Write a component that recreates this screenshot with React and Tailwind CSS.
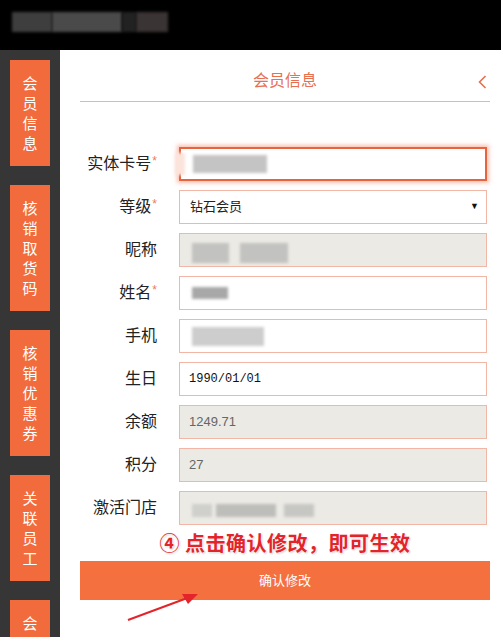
import React from 'react';

const font = { fontFamily: '"Liberation Sans", "Noto Sans CJK SC", sans-serif' };

// last tab is cut off by the window, only its first char shows
const tabs = [
  { text: '会员信息' },
  { text: '核销取货码' },
  { text: '核销优惠券' },
  { text: '关联员工' },
  { text: '会', tail: true },
];

const Blur = ({ className }) => <div className={`absolute blur-[1.5px] ${className}`} />;

const Field = ({ label, required, children, disabled, focused }) => (
  <div className="flex items-center h-[34px] pr-[3px]">
    <div className="w-[77px] text-right text-[16px] text-[#222] leading-none">
      {label}
      {required && <span className="text-[12px] text-[#ec7a5a] relative -top-[4px] ml-[1px]">*</span>}
    </div>
    <div
      className={`ml-[22px] flex-1 h-[34px] relative flex items-center text-[13px] ${
        focused
          ? 'border-2 border-[#e8643f] shadow-[0_0_4px_2px_rgba(245,140,110,0.55)]'
          : 'border border-[#f1b6a5]'
      } ${disabled ? 'bg-[#ebeae5]' : 'bg-white'}`}
    >
      {children}
    </div>
  </div>
);

export default function App() {
  return (
    <div className="w-[501px] h-[637px] overflow-hidden bg-black relative" style={font}>
      {/* top bar */}
      <div className="h-[50px] relative">
        <Blur className="left-[12px] top-[12px] w-[40px] h-[20px] bg-[#3e3e3e]" />
        <Blur className="left-[52px] top-[12px] w-[70px] h-[20px] bg-[#4a4a4a]" />
        <Blur className="left-[122px] top-[12px] w-[14px] h-[20px] bg-[#222]" />
        <Blur className="left-[136px] top-[12px] w-[32px] h-[20px] bg-[#3a3434]" />
      </div>

      <div className="flex h-[587px]">
        {/* sidebar */}
        <div className="w-[60px] bg-[#363636] flex flex-col gap-[19px] px-[10px] pt-[10px] shrink-0 overflow-hidden">
          {tabs.map((t, i) => (
            <div key={i} className={`bg-[#f26b3d] flex flex-col items-center pt-[13px] shrink-0 ${t.tail ? 'pb-[40px]' : 'pb-[13px]'}`}>
              {t.text.split('').map((c, j) => (
                <span key={j} className="text-white text-[15px] leading-[20px]" style={{ fontFamily: '"Noto Sans CJK SC", sans-serif' }}>
                  {c}
                </span>
              ))}
            </div>
          ))}
        </div>

        {/* main */}
        <div className="flex-1 bg-white pl-[20px] pr-[11px]">
          <div className="h-[52px] border-b border-[#f0b19f] pt-[11px] flex items-center justify-center relative">
            <span className="text-[16px] text-[#e8704f]">会员信息</span>
            <svg className="absolute right-[3px] top-[25px]" width="9" height="14" viewBox="0 0 9 14">
              <polyline points="7.5,1 1.5,7 7.5,13" fill="none" stroke="#e8704f" strokeWidth="1.6" />
            </svg>
          </div>

          <div className="mt-[45px] flex flex-col gap-[9px]">
            <Field label="实体卡号" required focused>
              <Blur className="left-[12px] top-[6px] w-[74px] h-[18px] bg-[#c4c4c4]" />
              <Blur className="left-[-6px] top-[4px] w-[10px] h-[22px] bg-[#fbe4dc]" />
            </Field>
            <Field label="等级" required>
              <span className="ml-[10px] text-[#222]">钻石会员</span>
              <span className="absolute right-[7px] top-[9px] text-[9px] text-[#111]">▼</span>
            </Field>
            <Field label="昵称" disabled>
              <Blur className="left-[12px] top-[9px] w-[37px] h-[20px] bg-[#c2c2c0]" />
              <Blur className="left-[60px] top-[9px] w-[48px] h-[20px] bg-[#c2c2c0]" />
            </Field>
            <Field label="姓名" required>
              <Blur className="left-[12px] top-[10px] w-[36px] h-[12px] bg-[#a8a8a8]" />
            </Field>
            <Field label="手机">
              <Blur className="left-[12px] top-[7px] w-[72px] h-[19px] bg-[#cdcdcd]" />
            </Field>
            <Field label="生日">
              <span className="ml-[9px] text-[12px] text-[#111]" style={{ fontFamily: '"Liberation Mono", monospace' }}>
                1990/01/01
              </span>
            </Field>
            <Field label="余额" disabled>
              <span className="ml-[9px] text-[#666]">1249.71</span>
            </Field>
            <Field label="积分" disabled>
              <span className="ml-[9px] text-[#666]">27</span>
            </Field>
            <Field label="激活门店" disabled>
              <Blur className="left-[12px] top-[12px] w-[20px] h-[13px] bg-[#cfcfcc]" />
              <Blur className="left-[36px] top-[12px] w-[60px] h-[13px] bg-[#bdbdba]" />
              <Blur className="left-[104px] top-[12px] w-[30px] h-[13px] bg-[#c6c6c3]" />
            </Field>
          </div>

          <div className="h-[36px] flex items-center justify-center">
            <span
              className="text-[20px] font-bold text-[#e3242b] tracking-[0.5px]"
              style={{
                fontFamily: '"Noto Sans CJK SC", sans-serif',
                textShadow: '0 0 2px #fff, 0 0 2px #fff, 1px 1px 2px rgba(0,0,0,0.25)',
              }}
            >
              ④ 点击确认修改，即可生效
            </span>
          </div>

          <button className="w-full h-[39px] bg-[#f4703f] text-white text-[13px] flex items-center justify-center">
            确认修改
          </button>
        </div>
      </div>

      {/* arrow */}
      <svg className="absolute left-[120px] top-[585px]" width="90" height="45" viewBox="0 0 90 45">
        <line x1="8" y1="35" x2="70" y2="12" stroke="#e3242b" strokeWidth="2" />
        <polygon points="78,9 62,9 68,19" fill="#e3242b" />
      </svg>
    </div>
  );
}
